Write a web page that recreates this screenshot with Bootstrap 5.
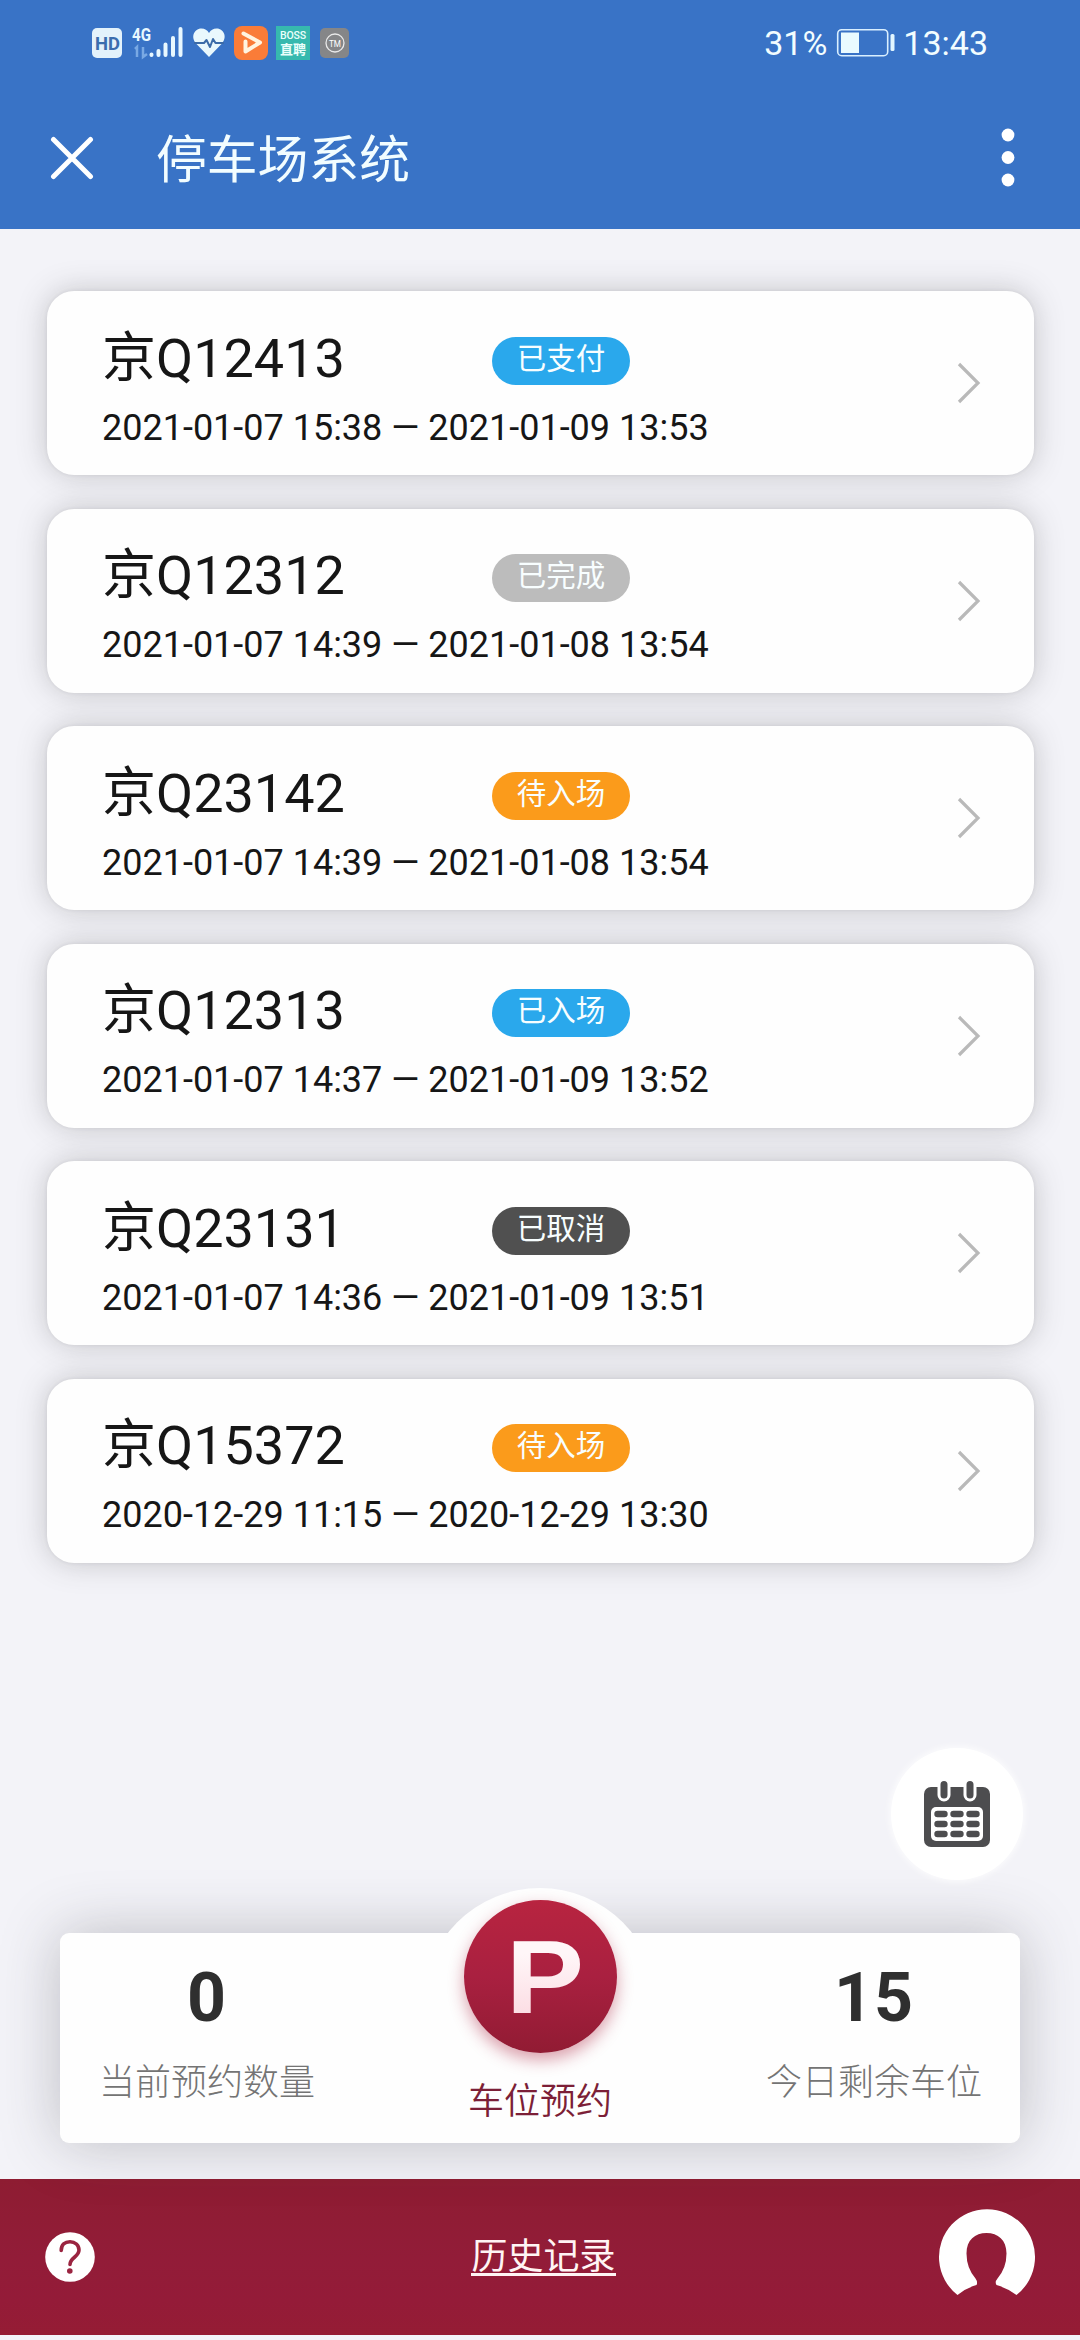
<!DOCTYPE html>
<html lang="zh-CN">
<head>
<meta charset="utf-8">
<meta name="viewport" content="width=device-width, initial-scale=1">
<title>停车场系统</title>
<link href="https://cdn.jsdelivr.net/npm/bootstrap@5.3.0/dist/css/bootstrap.min.css" rel="stylesheet">
<style>
  body { font-family: Roboto, "Noto Sans CJK SC", sans-serif; background: #f3f3f8; color: #161616; }
  svg { display: block; flex: none; }
  .app-screen { width: 1080px; height: 2340px; overflow: hidden; }
  .top-area { background: #3973c6; height: 229px; color: #f2fdff; }
  .status-line { height: 86px; padding: 0 92px 0 92px; font-size: 34px; line-height: 1; }
  .status-left { width: 260px; }
  .title-line { height: 143px; padding: 0 65px 0 50px; }
  .app-title { font-size: 50.8px; line-height: 1; margin-left: 62px; padding-top: 7px; font-weight: 400; }
  .record-list { padding: 62px 46px 0 47px; gap: 33.5px; }
  .record-card { height: 184px; border: 0; border-radius: 27px; background: #fefefe; padding: 0 53px 0 55px; box-shadow: 0 0 30px rgba(60,60,65,.26), 0 0 4px rgba(0,0,0,.07); color: inherit; }
  .record-info { padding-top: 11px; }
  .plate-cell { width: 390px; font-size: 54px; line-height: 60px; }
  .status-pill { width: 138px; height: 48px; font-size: 29.5px; line-height: 44px; border-radius: 24px; font-weight: 400; padding: 0; margin-top: 4px; color: #f8feff; }
  .pill-blue { background: #2aa8ec; }
  .pill-grey { background: #bcbcbc; }
  .pill-orange { background: #fb9b1b; }
  .pill-dark { background: #505050; }
  .time-range { font-size: 36px; line-height: 42px; margin-top: 18px; }
  .calendar-btn { left: 891px; top: 1748px; width: 132px; height: 132px; background: #fff; box-shadow: 0 0 6px 2px rgba(255,255,255,.7); }
  .summary-panel { margin: 0 60px 36px; height: 210px; border-radius: 9px; background: #fefefe; box-shadow: 0 0 60px rgba(50,50,60,.28); padding: 0 35px 0 36px; }
  .stat-num { font-size: 68px; font-weight: 700; line-height: 68px; color: #2f2f2f; letter-spacing: 1px; padding-top: 31px; }
  .stat-label { font-size: 36px; line-height: 40px; color: #747474; font-weight: 300; width: 222px; margin-top: 31px; }
  .park-halo { left: 363px; top: -45px; width: 234px; height: 234px; background: #fefefe; }
  .park-btn { width: 153px; height: 153px; margin-top: 12px; background: linear-gradient(#b82440, #a92040 50%, #911b33); box-shadow: 0 7px 16px rgba(170,30,60,.42); }
  .park-label { font-size: 36px; line-height: 40px; color: #7c1f37; margin-top: 29px; white-space: nowrap; font-weight: 350; }
  .foot-bar { height: 156px; background: linear-gradient(#8e1c32, #921c38 50%, #941b38 78%, #951c34); padding: 0 45px; margin-bottom: 5px; }
  .help-dot { width: 50px; height: 50px; }
  .history-link { font-size: 36px; line-height: 38px; color: #fff4f4; border-bottom: 3px solid #fff4f4; height: 38px; text-decoration: none; margin-left: 53px; margin-bottom: 1px; }
</style>
<script src="https://cdn.jsdelivr.net/npm/bootstrap@5.3.0/dist/js/bootstrap.bundle.min.js"></script>
</head>
<body>
<div class="app-screen position-relative d-flex flex-column">
  <header class="top-area">
    <div class="status-line d-flex align-items-center justify-content-between">
      <svg class="status-left" height="36" viewBox="92 25 260 36" width="260">
        <rect x="92" y="28" width="30" height="30" rx="5" fill="#e3f2fb"/>
        <text x="95" y="50" font-family="Roboto" font-weight="700" font-size="19" textLength="25" lengthAdjust="spacingAndGlyphs" fill="#3a6dae">HD</text>
        <text x="132" y="41" font-family="Roboto" font-weight="700" font-size="18" textLength="19" lengthAdjust="spacingAndGlyphs" fill="#e8f8ff">4G</text>
        <g stroke-linecap="round" stroke-width="4" stroke="#e8f8ff">
          <path d="M151.500 54.500v.5M158.500 51v4M165.500 44.500v10.500M173 38v17M180.500 29v26"/>
        </g>
        <path d="M135 49l2-2v10M143 47v10l4-3" stroke="#79a9e4" stroke-width="2.500" fill="none"/>
        <path d="M209 57L196 43.500C190 36 195 28.500 201.500 28.500q5 0 7.500 4.500q2.500-4.500 7.500-4.500C223 28.500 228 36 222 43.500Z" fill="#e9f8fd"/>
        <path d="M194 43h10l2.500-3 3.500 7 3-8 2.500 4H224" stroke="#3b6ba8" stroke-width="2" fill="none" stroke-linejoin="round"/>
        <rect x="234" y="26" width="34" height="34" rx="8" fill="#fa7c38"/>
        <path d="M243.500 33.500L260 42.500L245.500 51.500V41.500" stroke="#fff4df" stroke-width="4" fill="none" stroke-linecap="round" stroke-linejoin="round"/>
        <rect x="276" y="26" width="34" height="34" fill="#36b9ae"/>
        <text x="280" y="39" font-family="Roboto" font-weight="500" font-size="10.500" textLength="26" fill="#eafffb">BOSS</text>
        <text x="280" y="54" font-family="Noto Sans CJK SC" font-weight="700" font-size="13" textLength="26" fill="#eafffb">直聘</text>
        <rect x="320" y="28" width="29" height="30" rx="5" fill="#858688"/>
        <circle cx="335" cy="43" r="9" fill="none" stroke="#e9e9e9" stroke-width="1.300"/>
        <text x="329" y="47" font-family="Roboto" font-size="9.500" textLength="12" lengthAdjust="spacingAndGlyphs" fill="#fff">TM</text>
      </svg>
      <div class="d-flex align-items-center">
        <span>31%</span>
        <svg width="60" height="30" viewBox="835 28 60 30" class="ms-2 me-2">
          <rect x="837.700" y="29.700" width="50" height="26" rx="4" fill="none" stroke="#d9efff" stroke-width="1.600"/>
          <rect x="841" y="32.500" width="18" height="20.500" fill="#eafbff"/>
          <rect x="890.500" y="34" width="4" height="17" rx="1.500" fill="#e2f6ff"/>
        </svg>
        <span>13:43</span>
      </div>
    </div>
    <div class="title-line d-flex align-items-center">
      <svg width="44" height="44" viewBox="0 0 44 44"><path d="M3.500 3.500l37 37M40.500 3.500l-37 37" stroke="#fff" stroke-width="5" stroke-linecap="round"/></svg>
      <h1 class="app-title mb-0">停车场系统</h1>
      <svg class="ms-auto" width="14" height="60" viewBox="0 0 14 60" fill="#fff"><circle cx="7" cy="7" r="6.400"/><circle cx="7" cy="29.500" r="6.400"/><circle cx="7" cy="52" r="6.400"/></svg>
    </div>
  </header>

  <main class="record-list d-flex flex-column flex-grow-1">
    <a class="record-card card flex-row align-items-center justify-content-between text-decoration-none">
      <div class="record-info"><div class="d-flex align-items-center"><span class="plate-cell">京Q12413</span><span class="badge status-pill pill-blue">已支付</span></div><div class="time-range">2021-01-07 15:38 — 2021-01-09 13:53</div></div>
      <svg width="24" height="42" viewBox="0 0 24 42"><path d="M2 2l19 19L2 40" fill="none" stroke="#b9b9b9" stroke-width="3.200"/></svg>
    </a>
    <a class="record-card card flex-row align-items-center justify-content-between text-decoration-none">
      <div class="record-info"><div class="d-flex align-items-center"><span class="plate-cell">京Q12312</span><span class="badge status-pill pill-grey">已完成</span></div><div class="time-range">2021-01-07 14:39 — 2021-01-08 13:54</div></div>
      <svg width="24" height="42" viewBox="0 0 24 42"><path d="M2 2l19 19L2 40" fill="none" stroke="#b9b9b9" stroke-width="3.200"/></svg>
    </a>
    <a class="record-card card flex-row align-items-center justify-content-between text-decoration-none">
      <div class="record-info"><div class="d-flex align-items-center"><span class="plate-cell">京Q23142</span><span class="badge status-pill pill-orange">待入场</span></div><div class="time-range">2021-01-07 14:39 — 2021-01-08 13:54</div></div>
      <svg width="24" height="42" viewBox="0 0 24 42"><path d="M2 2l19 19L2 40" fill="none" stroke="#b9b9b9" stroke-width="3.200"/></svg>
    </a>
    <a class="record-card card flex-row align-items-center justify-content-between text-decoration-none">
      <div class="record-info"><div class="d-flex align-items-center"><span class="plate-cell">京Q12313</span><span class="badge status-pill pill-blue">已入场</span></div><div class="time-range">2021-01-07 14:37 — 2021-01-09 13:52</div></div>
      <svg width="24" height="42" viewBox="0 0 24 42"><path d="M2 2l19 19L2 40" fill="none" stroke="#b9b9b9" stroke-width="3.200"/></svg>
    </a>
    <a class="record-card card flex-row align-items-center justify-content-between text-decoration-none">
      <div class="record-info"><div class="d-flex align-items-center"><span class="plate-cell">京Q23131</span><span class="badge status-pill pill-dark">已取消</span></div><div class="time-range">2021-01-07 14:36 — 2021-01-09 13:51</div></div>
      <svg width="24" height="42" viewBox="0 0 24 42"><path d="M2 2l19 19L2 40" fill="none" stroke="#b9b9b9" stroke-width="3.200"/></svg>
    </a>
    <a class="record-card card flex-row align-items-center justify-content-between text-decoration-none">
      <div class="record-info"><div class="d-flex align-items-center"><span class="plate-cell">京Q15372</span><span class="badge status-pill pill-orange">待入场</span></div><div class="time-range">2020-12-29 11:15 — 2020-12-29 13:30</div></div>
      <svg width="24" height="42" viewBox="0 0 24 42"><path d="M2 2l19 19L2 40" fill="none" stroke="#b9b9b9" stroke-width="3.200"/></svg>
    </a>
  </main>

  <section class="summary-panel position-relative d-flex justify-content-between text-center">
    <div>
      <div class="stat-num">0</div>
      <div class="stat-label">当前预约数量</div>
    </div>
    <div class="park-halo position-absolute rounded-circle d-flex flex-column align-items-center">
      <div class="park-btn rounded-circle flex-shrink-0">
        <svg width="153" height="153" viewBox="0 0 153 153">
          <defs><linearGradient id="letterFade" x1="0" y1="0" x2="0" y2="1"><stop offset=".3" stop-color="#fff6f8"/><stop offset="1" stop-color="#fbd5dd"/></linearGradient></defs>
          <text x="42" y="113" font-family="Liberation Sans" font-weight="700" font-size="104" textLength="78" lengthAdjust="spacingAndGlyphs" fill="url(#letterFade)">P</text>
        </svg>
      </div>
      <div class="park-label">车位预约</div>
    </div>
    <div>
      <div class="stat-num">15</div>
      <div class="stat-label">今日剩余车位</div>
    </div>
  </section>

  <footer class="foot-bar d-flex align-items-center justify-content-between">
    <svg class="help-dot" viewBox="0 0 50 50"><circle cx="25" cy="25" r="24.800" fill="#fff"/><path d="M16.200 18.500C16.200 12.500 20 9.700 25 9.700S34 13 34 18c0 7-9 7.500-9 14.500" fill="none" stroke="#9a2440" stroke-width="3.600" stroke-linecap="round"/><circle cx="24.800" cy="39" r="2.800" fill="#9a2440"/></svg>
    <a class="history-link">历史记录</a>
    <svg width="96" height="96" viewBox="0 0 96 96"><path d="M18.500 86A48 48 0 1 1 77.500 86Q68 79 57.500 76Q55.500 73 58.500 69.500Q67.500 59 67.500 44.500C67.500 31 59 24 47.500 24S27.500 31 27.500 44.500Q27.500 59 36.500 69.500Q39 73 37.500 76Q27 79 18.500 86Z" fill="#fff"/></svg>
  </footer>

  <button class="calendar-btn position-absolute btn rounded-circle border-0 p-0 d-flex align-items-center justify-content-center" aria-label="日历">
    <svg width="66" height="68" viewBox="0 0 66 68">
      <rect x="0" y="7" width="66" height="60" rx="7" fill="#4d4d4f"/>
      <path d="M20 5v10M46 5v10" stroke="#fff" stroke-width="13" stroke-linecap="round"/>
      <path d="M20 4.500v10.500M46 4.500v10.500" stroke="#4d4d4f" stroke-width="7" stroke-linecap="round"/>
      <rect x="7" y="27" width="52" height="34" rx="5" fill="#fff"/>
      <path d="M13.500 34h7M29.500 34h7M45.500 34h7M13.500 44h7M29.500 44h7M45.500 44h7M13.500 54h7M29.500 54h7M45.500 54h7" stroke="#4d4d4f" stroke-width="6.400" stroke-linecap="round"/>
    </svg>
  </button>
</div>
</body>
</html>
